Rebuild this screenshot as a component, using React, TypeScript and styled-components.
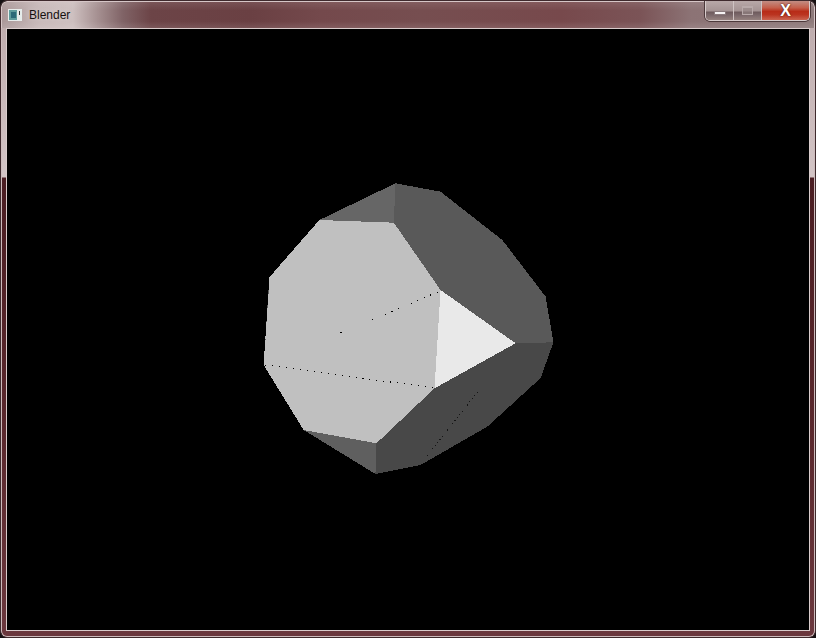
import React from "react";
import styled, { createGlobalStyle } from "styled-components";

const Global = createGlobalStyle`
  html, body { margin: 0; padding: 0; background: #000; }
  #root { width: 816px; height: 638px; background: #141012; }
`;

const Window = styled.div`
  width: 816px;
  height: 638px;
  box-sizing: border-box;
  display: flex;
  flex-direction: column;
  overflow: hidden;
  border-radius: 7px;
  border: 1px solid #3f2a2d;
`;

const TitleBar = styled.div`
  height: 27px;
  flex: none;
  display: flex;
  align-items: center;
  box-sizing: border-box;
  padding: 1px 0 0 7px;
  gap: 7px;
  position: relative;
  border-radius: 6px 6px 0 0;
  box-shadow: inset 0 1px 0 #d6c6c7, inset 1px 0 0 #d6c6c7, inset -1px 0 0 #d6c6c7;
  background:
    linear-gradient(180deg, rgba(255,255,255,.1) 0, rgba(255,255,255,0) 35%, rgba(255,255,255,0) 75%, rgba(255,255,255,.1) 100%),
    linear-gradient(90deg,
      #a99798 0, #c8b9b9 40px, #cdbfbf 72px, #a89394 95px, #806366 122px, #6c4447 150px,
      #6a4043 250px, #74494c 320px, #764e50 420px, #77494c 560px, #7b5457 640px, #8c7375 690px, #8e7a7b 814px);
`;

const AppIcon = styled.svg`
  width: 14px;
  height: 12px;
  flex: none;
`;

const Title = styled.span`
  font: 12px "Liberation Sans", Arial, sans-serif;
  color: #15100f;
  text-shadow: 0 0 6px rgba(255,255,255,.55);
`;

const Caption = styled.div`
  position: absolute;
  top: 0;
  right: 5px;
  display: flex;
  height: 20px;
  box-sizing: border-box;
  border: 1px solid #d8cccc;
  border-top: 0;
  border-radius: 0 0 5px 5px;
  overflow: hidden;
  box-shadow: 0 1px 0 #4d393b, -1px 0 0 #4d393b, 1px 0 0 #4d393b;
`;

const CaptionButton = styled.div<{ $w: number; $close?: boolean }>`
  width: ${(p) => p.$w}px;
  display: flex;
  align-items: center;
  justify-content: center;
  border-right: ${(p) => (p.$close ? "0" : "1px solid #cfc3c3")};
  background: ${(p) =>
    p.$close
      ? "linear-gradient(180deg, #c28d83 0, #c4604c 35%, #b82c18 55%, #bb3420 72%, #cb6450 100%)"
      : "linear-gradient(180deg, #b8a8a8 0, #a59494 50%, #6f5c5e 60%, #7c696b 75%, #95827f 100%)"};
`;

const MinGlyph = styled.div`
  width: 10px;
  height: 2px;
  margin-top: 5px;
  background: #f6f3f3;
  border: 1px solid #8a7a7c;
`;

const MaxGlyph = styled.div`
  width: 9px;
  height: 6px;
  background: rgba(150,135,135,.6);
  border: 1px solid #b8a9a9;
  border-top-width: 2px;
`;

const CloseGlyph = styled.span`
  font: bold 16px "Liberation Sans", Arial, sans-serif;
  color: #fff;
  line-height: 1;
  text-shadow: 0 0 2px #5a2018, 0 0 1px #5a2018;
`;

const Frame = styled.div`
  flex: 1;
  min-height: 0;
  padding: 0 5px 6px;
  border-radius: 0 0 6px 6px;
  box-shadow: inset 1px 0 0 #cdbcbd, inset -1px 0 0 #cdbcbd, inset 0 -1px 0 #cdbcbd;
  background: linear-gradient(180deg, #bfadae 0, #d3c5c6 149px, #4a1d22 150px, #5a282d 400px, #6b383e 100%);
`;

const Viewport = styled.div`
  height: 100%;
  box-sizing: border-box;
  background: #000;
  border: 1px solid #d9cccc;
`;

const Scene = styled.svg`
  display: block;
  width: 100%;
  height: 100%;
`;

export default function App() {
  return (
    <Window>
      <Global />
      <TitleBar>
        <AppIcon viewBox="0 0 14 12">
          <rect width="14" height="12" fill="#e6eceb" />
          <rect x="1" y="1" width="8" height="10" fill="#5f9c9c" />
          <rect x="3" y="3" width="5" height="6" fill="#2c6a78" />
          <rect x="11" y="2" width="1" height="4" fill="#333" />
        </AppIcon>
        <Title>Blender</Title>
        <Caption>
          <CaptionButton $w={27}><MinGlyph /></CaptionButton>
          <CaptionButton $w={27}><MaxGlyph /></CaptionButton>
          <CaptionButton $w={47} $close><CloseGlyph>X</CloseGlyph></CaptionButton>
        </Caption>
      </TitleBar>
      <Frame>
        <Viewport>
          <Scene viewBox="7 29 801 601" preserveAspectRatio="none" shapeRendering="crispEdges">
            <polygon fill="#5f5f5f" points="303.3,430 376,443.3 375,474" />
            <polygon fill="#666666" points="319,220 395,183.3 393.3,222.7" />
            <polygon fill="#595959" points="395,183.3 440,191.7 501.7,240 545,296.7 552.7,342.3 515,343.3 440,290 393.3,222.7" />
            <polygon fill="#484848" points="515,343.3 552.7,342.3 540,378 486.7,426.7 420,465 375,474 376,443.3 434,388.3" />
            <polygon fill="#c0c0c0" points="319,220 393.3,222.7 440,290 434,388.3 376,443.3 303.3,430 263.3,365 269,277.3" />
            <polygon fill="#e9e9e9" points="440,290 515,343.3 434,388.3" />
            <g stroke="#000" strokeWidth="1" strokeDasharray="1 6" fill="none">
              <path d="M437 292 L367 322" />
              <path d="M341 332 L340 333" strokeDasharray="none" />
              <path d="M265 365 L434 388" />
              <path d="M477 392 L425 458" strokeDasharray="1 3" strokeOpacity=".7" />
              <path d="M268 290 L264 350" strokeDasharray="4 3" strokeOpacity=".5" />
            </g>
          </Scene>
        </Viewport>
      </Frame>
    </Window>
  );
}
